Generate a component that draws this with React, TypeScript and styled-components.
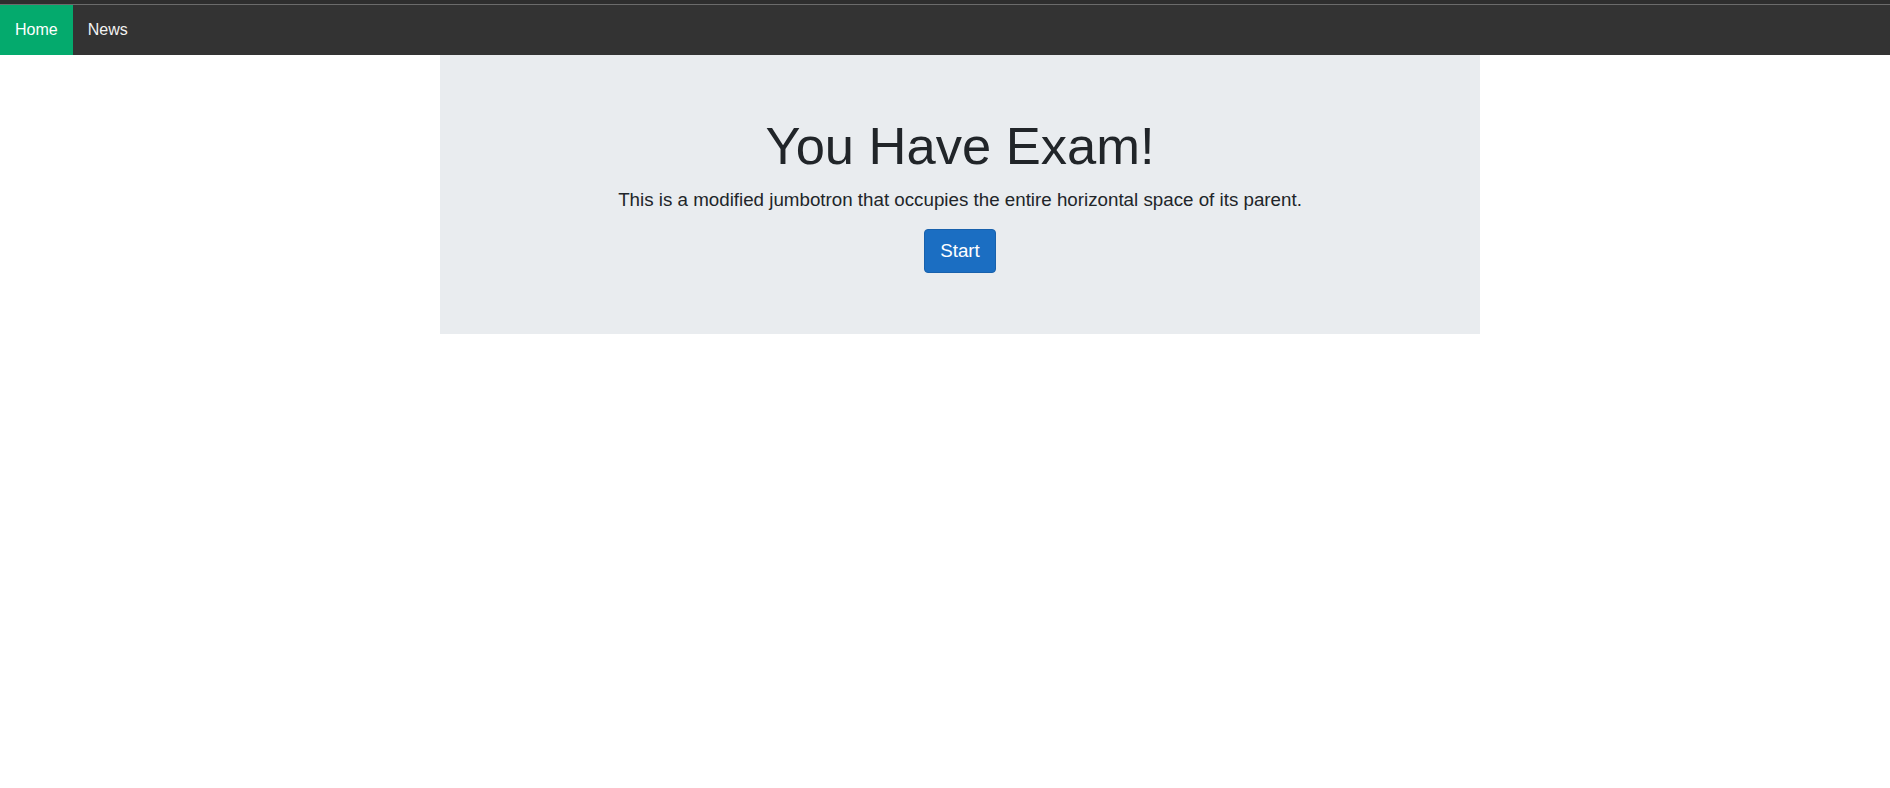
import React from "react";
import styled, { createGlobalStyle } from "styled-components";

const GlobalStyle = createGlobalStyle`
  html, body { margin: 0; padding: 0; background: #fff; }
  body { font-family: "Liberation Sans", Arial, sans-serif; color: #212529; }
  * { box-sizing: border-box; }
`;

const Page = styled.div`
  display: flex;
  flex-direction: column;
  min-height: 788px;
`;

const TopEdge = styled.div`
  height: 5px;
  background: #2e2e2e;
  border-bottom: 1px solid #6b6b6b;
`;

const TopNav = styled.nav`
  display: flex;
  height: 50px;
  background: #333;
`;

const NavLink = styled.a<{ $active?: boolean }>`
  display: flex;
  align-items: center;
  padding: 0 15px;
  font-size: 16px;
  text-decoration: none;
  background: ${(p) => (p.$active ? "#04aa6d" : "transparent")};
  color: ${(p) => (p.$active ? "#fff" : "#f2f2f2")};
`;

const Main = styled.main`
  display: flex;
  justify-content: center;
  padding-left: 30px;
`;

const Jumbotron = styled.section`
  width: 1040px;
  background: #e9ecef;
  padding: 59px 32px 61px;
  display: flex;
  flex-direction: column;
  align-items: center;
  text-align: center;
`;

const Title = styled.h1`
  margin: 0 0 9px;
  font-size: 52.5px;
  font-weight: 300;
  line-height: 1.2;
  color: #212529;
`;

const Lead = styled.p`
  margin: 0 0 16px;
  font-size: 18.75px;
  line-height: 27px;
  color: #212529;
`;

const StartButton = styled.button`
  font-family: inherit;
  font-size: 18.75px;
  line-height: 26px;
  padding: 8px 15px;
  color: #fff;
  background: #1b6ec2;
  border: 1px solid #1861ac;
  border-radius: 4px;
  cursor: pointer;
`;

export default function App() {
  return (
    <>
      <GlobalStyle />
      <Page>
        <TopEdge />
        <TopNav>
          <NavLink $active href="#">Home</NavLink>
          <NavLink href="#">News</NavLink>
        </TopNav>
        <Main>
          <Jumbotron>
            <Title>You Have Exam!</Title>
            <Lead>This is a modified jumbotron that occupies the entire horizontal space of its parent.</Lead>
            <StartButton>Start</StartButton>
          </Jumbotron>
        </Main>
      </Page>
    </>
  );
}
